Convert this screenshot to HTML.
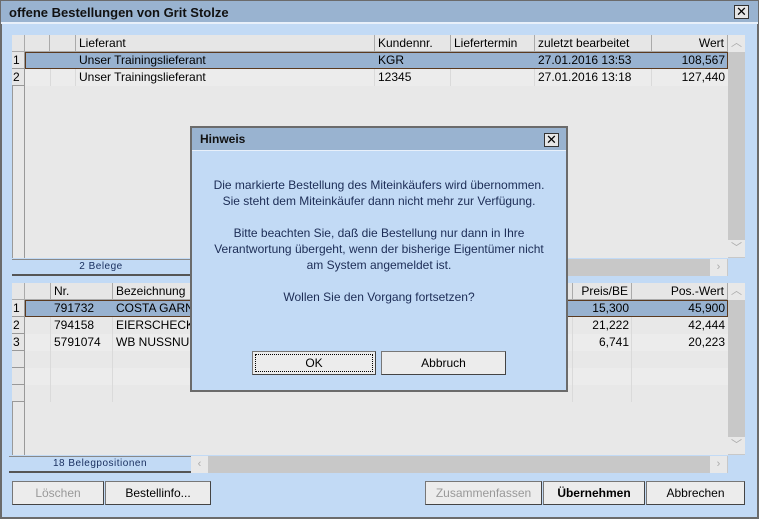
<!DOCTYPE html>
<html><head><meta charset="utf-8"><style>
*{margin:0;padding:0;box-sizing:border-box}
body{width:759px;height:519px;overflow:hidden;font-family:"Liberation Sans",Arial,sans-serif;font-size:12px;background:#c2daf5;position:relative;color:#000}
.a{position:absolute}
.frame{left:0;top:0;width:759px;height:519px;border:2px solid #6b6b6b;border-top:1px solid #6b6b6b}
.title{left:1px;top:1px;width:757px;height:23px;background:#99b3d0;border-bottom:2px solid #e8f0fa;font-weight:bold;font-size:13px;padding:4px 8px;color:#111}
.xb{width:15px;height:14px;border:1px solid #333;background:#e6e6e6;font-size:13px;line-height:12px;text-align:center;font-weight:normal}
.tbl{background:#e8e8e8;border-left:1px solid #999}
.hd{background:#e6e6e6;border-right:1px solid #aaa;border-bottom:1px solid #aaa;height:17px;line-height:16px;padding:0 3px;white-space:nowrap;overflow:hidden}
.c{height:17px;line-height:17px;padding:0 3px;white-space:nowrap;overflow:hidden}
.rn{border-bottom:1px solid #999;border-right:1px solid #999;background:#e6e6e6}
.vl{width:1px;background:#dadada}
.sel{background:#98b2d0}
.sb{background:#c8c8c8}
.arr{background:#e8e8e8;color:#aaa;text-align:center;font-size:11px;line-height:17px}
.lab{background:#c2daf5;border-top:1px solid #888;border-bottom:2px solid #555;color:#1a3060;font-size:10px;text-align:center;line-height:14px;letter-spacing:.5px}
.btn{background:#ececec;border:1px solid #777;border-right-color:#444;border-bottom-color:#444;text-align:center;line-height:22px;height:24px}
.dlg{left:190px;top:126px;width:378px;height:266px;border:2px solid #6b6b6b;background:#c2daf5}
.dt{color:#1c2c55;font-size:12px;text-align:center;line-height:16px}
</style></head><body>
<div class="a frame"></div>
<div class="a title">offene Bestellungen von Grit Stolze</div>
<div class="a xb" style="left:734px;top:5px">✕</div>

<!-- top table -->
<div class="a tbl" style="left:12px;top:35px;width:716px;height:223px"></div>
<div class="a" style="left:12px;top:35px">
<div class="a hd" style="left:0;width:13px"></div><div class="a hd" style="left:13px;width:25px"></div><div class="a hd" style="left:38px;width:26px"></div>
<div class="a hd" style="left:64px;width:299px">Lieferant</div><div class="a hd" style="left:363px;width:76px">Kundennr.</div>
<div class="a hd" style="left:439px;width:84px">Liefertermin</div><div class="a hd" style="left:523px;width:117px">zuletzt bearbeitet</div>
<div class="a hd" style="left:640px;width:76px;text-align:right">Wert</div>
<div class="a" style="left:0;top:17px;width:13px;height:206px;border-right:1px solid #999"></div>
<div class="a" style="left:13px;top:34px;width:703px;height:17px;background:#ececec"></div>
<div class="a vl" style="left:38px;top:17px;height:34px"></div><div class="a vl" style="left:63px;top:17px;height:34px"></div>
<div class="a vl" style="left:362px;top:17px;height:34px"></div><div class="a vl" style="left:438px;top:17px;height:34px"></div>
<div class="a vl" style="left:522px;top:17px;height:34px"></div><div class="a vl" style="left:639px;top:17px;height:34px"></div>
<div class="a c rn" style="left:0;top:17px;width:13px;padding:0 1px">1</div><div class="a c rn" style="left:0;top:34px;width:13px;padding:0 1px">2</div>
<div class="a sel" style="left:13px;top:17px;width:703px;height:17px;border:1px solid #5a3a20"></div>
<div class="a c" style="left:64px;top:17px">Unser Trainingslieferant</div><div class="a c" style="left:363px;top:17px">KGR</div>
<div class="a c" style="left:523px;top:17px">27.01.2016 13:53</div><div class="a c" style="left:640px;top:17px;width:76px;text-align:right">108,567</div>
<div class="a c" style="left:64px;top:34px">Unser Trainingslieferant</div><div class="a c" style="left:363px;top:34px">12345</div>
<div class="a c" style="left:523px;top:34px">27.01.2016 13:18</div><div class="a c" style="left:640px;top:34px;width:76px;text-align:right">127,440</div>
</div>
<div class="a sb" style="left:728px;top:35px;width:17px;height:223px"></div>
<div class="a arr" style="left:728px;top:35px;width:17px;height:17px">︿</div>
<div class="a arr" style="left:728px;top:240px;width:17px;height:17px">﹀</div>
<div class="a lab" style="left:12px;top:259px;width:178px;height:17px">2 Belege</div>
<div class="a sb" style="left:190px;top:259px;width:538px;height:17px"></div>
<div class="a arr" style="left:710px;top:259px;width:17px;height:17px">›</div>

<!-- bottom table -->
<div class="a tbl" style="left:12px;top:283px;width:716px;height:172px"></div>
<div class="a" style="left:12px;top:283px">
<div class="a hd" style="left:0;width:13px"></div><div class="a hd" style="left:13px;width:26px"></div>
<div class="a hd" style="left:39px;width:62px">Nr.</div><div class="a hd" style="left:101px;width:460px">Bezeichnung</div>
<div class="a hd" style="left:561px;width:59px;text-align:right">Preis/BE</div><div class="a hd" style="left:620px;width:96px;text-align:right">Pos.-Wert</div>
<div class="a" style="left:0;top:17px;width:13px;height:155px;border-right:1px solid #999"></div>
<div class="a" style="left:13px;top:51px;width:703px;height:17px;background:#ececec"></div>
<div class="a" style="left:13px;top:85px;width:703px;height:17px;background:#ececec"></div>
<div class="a vl" style="left:38px;top:17px;height:102px"></div><div class="a vl" style="left:100px;top:17px;height:102px"></div>
<div class="a vl" style="left:560px;top:17px;height:102px"></div><div class="a vl" style="left:619px;top:17px;height:102px"></div>
<div class="a c rn" style="left:0;top:17px;width:13px;padding:0 1px">1</div><div class="a c rn" style="left:0;top:34px;width:13px;padding:0 1px">2</div><div class="a c rn" style="left:0;top:51px;width:13px;padding:0 1px">3</div>
<div class="a c rn" style="left:0;top:68px;width:13px"></div><div class="a c rn" style="left:0;top:85px;width:13px"></div><div class="a c rn" style="left:0;top:102px;width:13px"></div>
<div class="a sel" style="left:13px;top:17px;width:703px;height:17px;border:1px solid #5a3a20"></div>
<div class="a c" style="left:39px;top:17px">791732</div><div class="a c" style="left:101px;top:17px">COSTA GARNELEN</div>
<div class="a c" style="left:39px;top:34px">794158</div><div class="a c" style="left:101px;top:34px">EIERSCHECKE</div>
<div class="a c" style="left:39px;top:51px">5791074</div><div class="a c" style="left:101px;top:51px">WB NUSSNUGAT</div>
<div class="a c" style="left:561px;top:17px;width:59px;text-align:right">15,300</div><div class="a c" style="left:620px;top:17px;width:96px;text-align:right">45,900</div>
<div class="a c" style="left:561px;top:34px;width:59px;text-align:right">21,222</div><div class="a c" style="left:620px;top:34px;width:96px;text-align:right">42,444</div>
<div class="a c" style="left:561px;top:51px;width:59px;text-align:right">6,741</div><div class="a c" style="left:620px;top:51px;width:96px;text-align:right">20,223</div>
</div>
<div class="a sb" style="left:728px;top:283px;width:17px;height:172px"></div>
<div class="a arr" style="left:728px;top:283px;width:17px;height:17px">︿</div>
<div class="a arr" style="left:728px;top:437px;width:17px;height:17px">﹀</div>
<div class="a lab" style="left:9px;top:456px;width:182px;height:17px">18 Belegpositionen</div>
<div class="a sb" style="left:191px;top:456px;width:537px;height:17px"></div>
<div class="a arr" style="left:191px;top:456px;width:17px;height:17px">‹</div>
<div class="a arr" style="left:710px;top:456px;width:17px;height:17px">›</div>

<div class="a btn" style="left:12px;top:481px;width:92px;color:#999">Löschen</div>
<div class="a btn" style="left:105px;top:481px;width:106px">Bestellinfo...</div>
<div class="a btn" style="left:425px;top:481px;width:117px;color:#999">Zusammenfassen</div>
<div class="a btn" style="left:543px;top:481px;width:102px;font-weight:bold">Übernehmen</div>
<div class="a btn" style="left:646px;top:481px;width:99px">Abbrechen</div>

<!-- dialog -->
<div class="a dlg">
<div class="a" style="left:0;top:0;width:374px;height:23px;background:#99b3d0;border-bottom:1px solid #e8f0fa;font-weight:bold;padding:4px 8px;color:#111">Hinweis</div>
<div class="a xb" style="left:352px;top:5px">✕</div>
<div class="a dt" style="left:0;top:49px;width:374px">Die markierte Bestellung des Miteinkäufers wird übernommen.<br>Sie steht dem Miteinkäufer dann nicht mehr zur Verfügung.<br><br>Bitte beachten Sie, daß die Bestellung nur dann in Ihre<br>Verantwortung übergeht, wenn der bisherige Eigentümer nicht<br>am System angemeldet ist.<br><br>Wollen Sie den Vorgang fortsetzen?</div>
<div class="a btn" style="left:60px;top:223px;width:124px;height:24px;outline:1px dotted #000;outline-offset:-4px">OK</div>
<div class="a btn" style="left:189px;top:223px;width:125px;height:24px">Abbruch</div>
</div>
</body></html>
